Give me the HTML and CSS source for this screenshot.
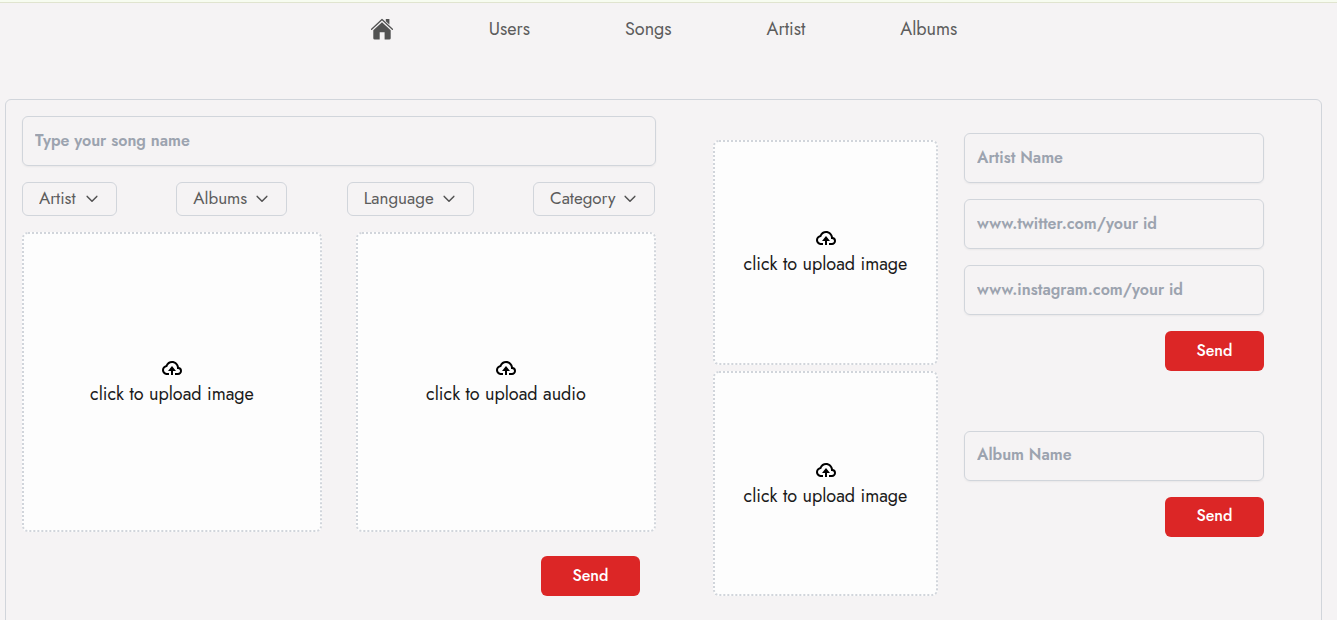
FILE: index.html
```html
<!DOCTYPE html>
<html lang="en">
<head>
<meta charset="utf-8">
<meta name="viewport" content="width=device-width, initial-scale=1">
<title>Dashboard - New song</title>
<link rel="stylesheet" href="styles.css">
</head>
<body>
<svg class="sprite" aria-hidden="true">
  <symbol id="cloud" viewBox="0 0 24 24">
    <path fill="currentColor" d="M13 19v-4h3l-4-5-4 5h3v4z"/>
    <path fill="currentColor" d="M7 19h2v-2H7c-1.654 0-3-1.346-3-3 0-1.404 1.199-2.756 2.673-3.015l.581-.102.192-.558C8.149 8.274 9.895 7 12 7c2.757 0 5 2.243 5 5v1h1c1.103 0 2 .897 2 2s-.897 2-2 2h-3v2h3c2.206 0 4-1.794 4-4a4.01 4.01 0 0 0-3.056-3.888C18.507 7.67 15.56 5 12 5 9.244 5 6.85 6.611 5.757 9.15 3.609 9.792 2 11.82 2 14c0 2.757 2.243 5 5 5z"/>
  </symbol>
  <symbol id="chevron" viewBox="0 0 12 8">
    <path fill="none" stroke="currentColor" stroke-width="1.5" stroke-linecap="round" stroke-linejoin="round" d="M1.2 1.4L6 6.3l4.8-4.9"/>
  </symbol>
</svg>
<header class="topbar">
  <nav class="nav">
    <a class="nav-link nav-home" href="#home" aria-label="Home">
      <svg class="home-icon" viewBox="0 0 24 24" aria-hidden="true">
        <path fill="currentColor" d="M12 5.2l8.7 8v8a1.4 1.4 0 0 1-1.4 1.4h-4.7v-7.4H9.7v7.4H4.7a1.4 1.4 0 0 1-1.4-1.4v-8zM15.8 2h3.6v5.6l-3.6-3.3z"/>
        <path fill="none" stroke="currentColor" stroke-width="1.3" stroke-linecap="round" stroke-linejoin="round" d="M1.6 12.2L12 2.5l10.4 9.7"/>
      </svg>
    </a>
    <a class="nav-link" href="#users">Users</a>
    <a class="nav-link" href="#songs">Songs</a>
    <a class="nav-link" href="#artist">Artist</a>
    <a class="nav-link" href="#albums">Albums</a>
  </nav>
</header>
<main class="panel">
  <form class="song">
    <input class="field" type="text" placeholder="Type your song name" aria-label="Song name">
    <div class="filters">
      <div class="filter filter-artist">
        <select class="select" aria-label="Artist"><option>Artist</option></select>
        <svg class="chevron" aria-hidden="true"><use href="#chevron"/></svg>
      </div>
      <div class="filter filter-albums">
        <select class="select" aria-label="Albums"><option>Albums</option></select>
        <svg class="chevron" aria-hidden="true"><use href="#chevron"/></svg>
      </div>
      <div class="filter filter-language">
        <select class="select" aria-label="Language"><option>Language</option></select>
        <svg class="chevron" aria-hidden="true"><use href="#chevron"/></svg>
      </div>
      <div class="filter filter-category">
        <select class="select" aria-label="Category"><option>Category</option></select>
        <svg class="chevron" aria-hidden="true"><use href="#chevron"/></svg>
      </div>
    </div>
    <div class="uploads">
      <label class="upload upload-large">
        <svg class="cloud" aria-hidden="true"><use href="#cloud"/></svg>
        <span>click to upload image</span>
        <input class="file" type="file" accept="image/*">
      </label>
      <label class="upload upload-large">
        <svg class="cloud" aria-hidden="true"><use href="#cloud"/></svg>
        <span>click to upload audio</span>
        <input class="file" type="file" accept="audio/*">
      </label>
    </div>
    <button class="send send-song" type="button">Send</button>
  </form>
  <div class="side">
    <form class="entry">
      <label class="upload upload-small">
        <svg class="cloud" aria-hidden="true"><use href="#cloud"/></svg>
        <span>click to upload image</span>
        <input class="file" type="file" accept="image/*">
      </label>
      <div class="fields">
        <input class="field" type="text" placeholder="Artist Name" aria-label="Artist name">
        <input class="field" type="text" placeholder="www.twitter.com/your id" aria-label="Twitter">
        <input class="field" type="text" placeholder="www.instagram.com/your id" aria-label="Instagram">
        <button class="send" type="button">Send</button>
      </div>
    </form>
    <form class="entry">
      <label class="upload upload-small">
        <svg class="cloud" aria-hidden="true"><use href="#cloud"/></svg>
        <span>click to upload image</span>
        <input class="file" type="file" accept="image/*">
      </label>
      <div class="fields">
        <input class="field" type="text" placeholder="Album Name" aria-label="Album name">
        <button class="send" type="button">Send</button>
      </div>
    </form>
  </div>
</main>
</body>
</html>
```
FILE: styles.css
```css
* {
  box-sizing: border-box;
}

body {
  margin: 0;
  background: #f5f3f4;
  color: #1a1a1a;
  font-family: Jost, Lato, sans-serif;
  font-size: 18px;
  line-height: 28px;
}

.sprite {
  position: absolute;
  width: 0;
  height: 0;
}

.topbar {
  border-top: 2px solid #f7fcf0;
  box-shadow: inset 0 1px #e0e4cf;
  padding: 13px 10px 56px 0;
}

.nav {
  display: flex;
  justify-content: center;
  gap: 95px;
}

.nav-link {
  color: #5c5c5c;
  text-decoration: none;
}

.nav-home {
  display: flex;
  align-items: center;
  color: #525252;
}

.home-icon {
  width: 24px;
  height: 24px;
}

.panel {
  display: grid;
  grid-template-columns: minmax(0, 1fr) auto;
  align-items: end;
  gap: 57px;
  margin: 0 15px 0 5px;
  padding: 16px 57px 32px 16px;
  border: 1px solid #d1d5db;
  border-radius: 6px;
}

.song {
  display: flex;
  flex-direction: column;
  gap: 16px;
}

.field {
  width: 100%;
  height: 50px;
  padding: 0 12px 2px;
  border: 1px solid #d1d5db;
  border-radius: 6px;
  background: transparent;
  box-shadow: 0 1px 2px rgba(0, 0, 0, 0.05);
  color: #525252;
  font-family: inherit;
  font-size: 16px;
  font-weight: 600;
}

.field::placeholder {
  color: #9ca3af;
  opacity: 1;
}

.filters,
.uploads {
  display: flex;
  justify-content: space-between;
}

.filters {
  padding-right: 1px;
}

.filter {
  display: grid;
  align-items: center;
}

.filter-artist {
  width: 95px;
}

.filter-albums {
  width: 111px;
}

.filter-language {
  width: 127px;
}

.filter-category {
  width: 122px;
}

.select,
.chevron {
  grid-area: 1 / 1;
}

.select {
  appearance: none;
  width: 100%;
  height: 34px;
  padding: 0 16px 2px;
  border: 1px solid #d1d5db;
  border-radius: 6px;
  background: transparent;
  color: #5c5c5c;
  font-family: inherit;
  font-size: 17px;
}

.chevron {
  justify-self: end;
  width: 12px;
  height: 8px;
  margin-right: 19px;
  color: #525252;
  pointer-events: none;
}

.upload {
  display: flex;
  flex-direction: column;
  align-items: center;
  justify-content: center;
  border: 2px dotted #d1d5db;
  border-radius: 6px;
  background: #fdfdfd;
  cursor: pointer;
}

.upload-large {
  width: 300px;
  height: 300px;
}

.upload-small {
  width: 225px;
  height: 225px;
}

.cloud {
  width: 24px;
  height: 24px;
  color: #000;
}

.file {
  position: absolute;
  width: 1px;
  height: 1px;
  opacity: 0;
  pointer-events: none;
}

.send {
  align-self: flex-end;
  width: 99px;
  height: 40px;
  padding: 0 0 2px;
  border: 0;
  border-radius: 6px;
  background: #dc2626;
  color: #fff;
  font-family: inherit;
  font-size: 16px;
  font-weight: 500;
}

.send-song {
  margin: 8px 16px 0 0;
}

.entry {
  display: flex;
  align-items: center;
  gap: 26px;
}

.fields {
  display: flex;
  flex-direction: column;
  gap: 16px;
  width: 300px;
}
```
